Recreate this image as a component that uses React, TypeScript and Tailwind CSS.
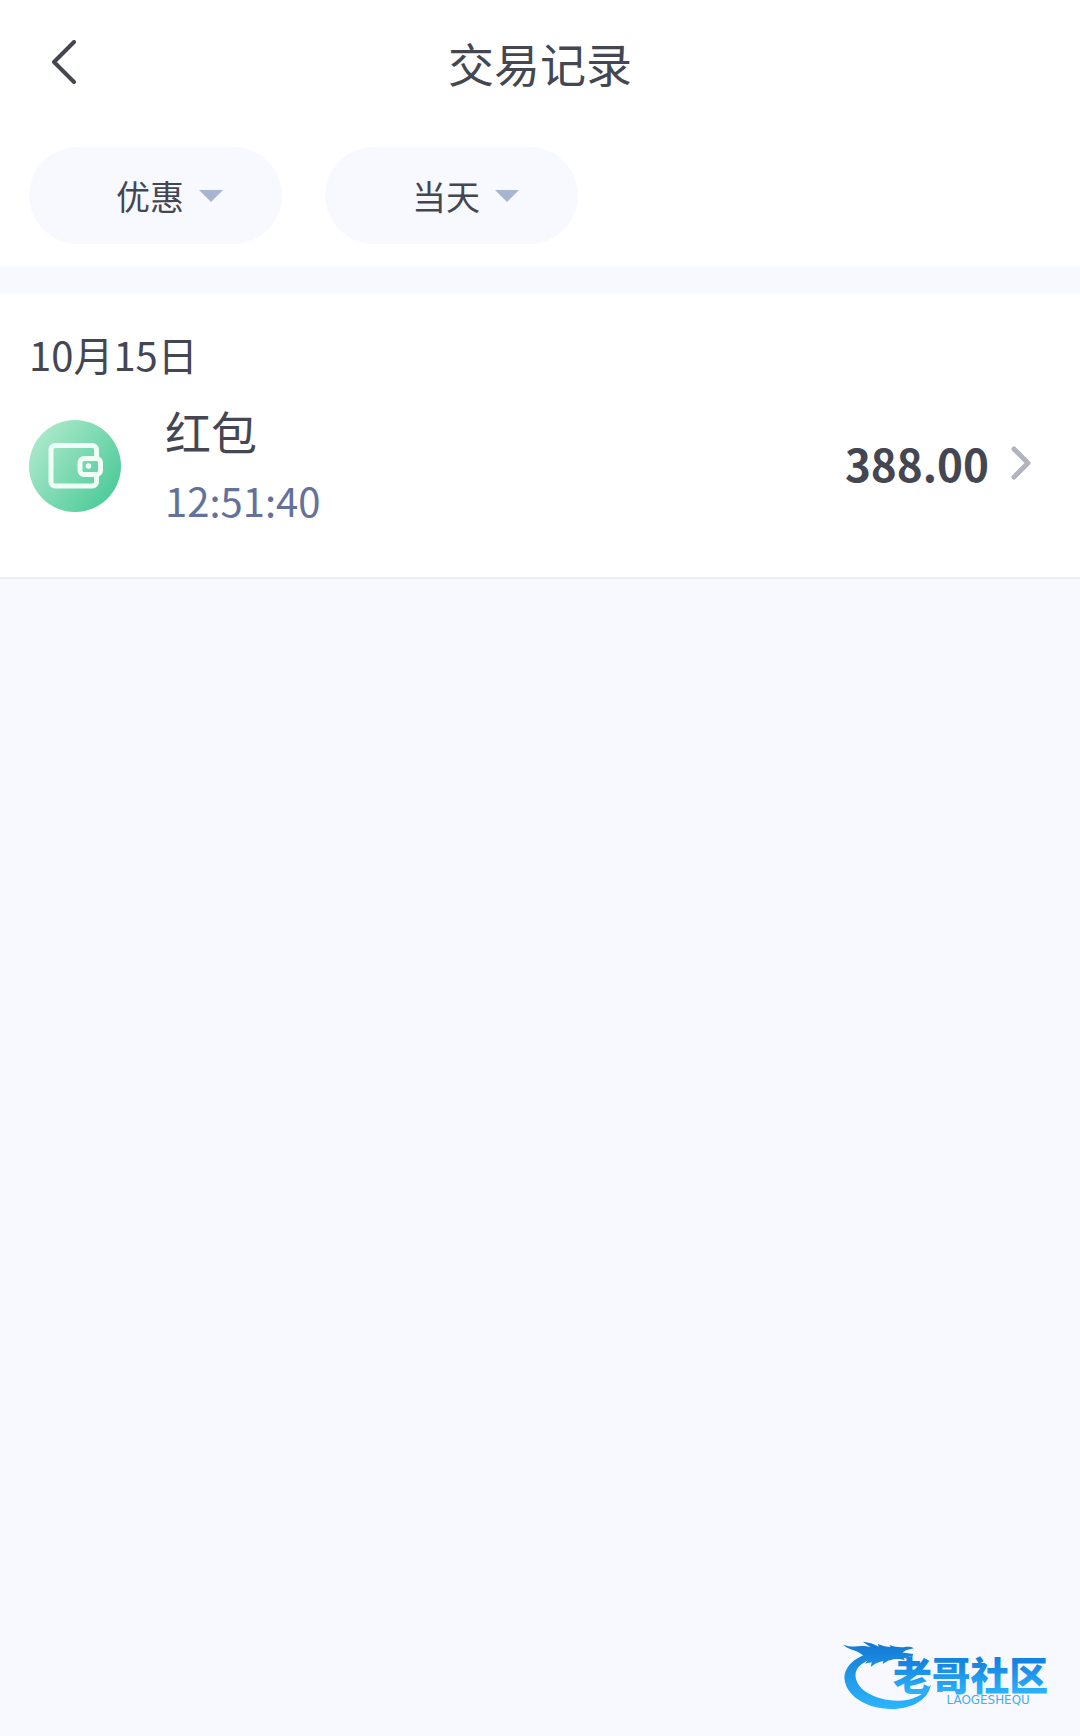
import { useState } from 'react';

interface FilterSelectProps {
  label: string;
  options: string[];
}

interface TransactionRecord {
  id: number;
  title: string;
  time: string;
  amount: string;
}

const records: TransactionRecord[] = [{ id: 1, title: '红包', time: '12:51:40', amount: '388.00' }];

function FilterSelect({ label, options }: FilterSelectProps) {
  const [value, setValue] = useState(options[0]);

  return (
    <div className="relative w-[253px]">
      <select
        aria-label={label}
        value={value}
        onChange={(e) => setValue(e.target.value)}
        className="block h-[97px] w-full appearance-none rounded-full bg-[#f8f9fe] pl-[87px] text-[34px] text-[#444752] outline-none"
      >
        {options.map((option) => (
          <option key={option}>{option}</option>
        ))}
      </select>
      <svg
        viewBox="0 0 24 12"
        className="pointer-events-none absolute top-[43px] left-[170px] h-3 w-6 fill-[#a7b5d2]"
        aria-hidden="true"
      >
        <path d="M0 0h24L12 12z" />
      </svg>
    </div>
  );
}

function WalletIcon() {
  return (
    <svg viewBox="0 0 92 92" className="size-[92px] shrink-0" fill="none" aria-hidden="true">
      <defs>
        <linearGradient id="wallet" x1="8" y1="18" x2="84" y2="74" gradientUnits="userSpaceOnUse">
          <stop stopColor="#a9e8c9" />
          <stop offset="1" stopColor="#50cb9b" />
        </linearGradient>
      </defs>
      <circle cx="46" cy="46" r="46" fill="url(#wallet)" />
      <g stroke="#effff8" strokeWidth="5" strokeLinejoin="round">
        <path d="M67.500 38v-8.500a4 4 0 0 0-4-4H26a4 4 0 0 0-4 4V62a4 4 0 0 0 4 4h37.500a4 4 0 0 0 4-4v-7" />
        <rect x="51" y="38.500" width="20.500" height="16" rx="4" />
      </g>
      <circle cx="59.500" cy="46" r="2.800" fill="#effff8" />
    </svg>
  );
}

function CommunityLogo() {
  return (
    <svg viewBox="36 32 666 208" className="h-[69px] w-[222px]" role="img" aria-label="老哥社区">
      <defs>
        <linearGradient id="dragon" x1="0" y1="40" x2="0" y2="235" gradientUnits="userSpaceOnUse">
          <stop stopColor="#1479d4" />
          <stop offset="1" stopColor="#2bb5fb" />
        </linearGradient>
        <linearGradient id="letters" x1="0" y1="95" x2="0" y2="190" gradientUnits="userSpaceOnUse">
          <stop stopColor="#1583e0" />
          <stop offset="1" stopColor="#2bb3fa" />
        </linearGradient>
      </defs>
      {/* body */}
      <path
        fill="url(#dragon)"
        d="M128 66C66 80 40 116 42 146c3 48 62 91 142 91 62 0 112-29 118-74-18 32-58 50-102 49-66-1-123-33-125-75-1-24 18-42 60-54z"
      />
      {/* head, horns and whiskers */}
      <path
        fill="url(#dragon)"
        d="M37 43c20 7 38 6 56 4 10-1 20 1 28 4l-24-17c20 2 36 8 48 15l-2-8c14 6 26 9 38 9l-4-6c18 6 34 8 48 6 9-1 18 0 26 4l-24 6-10 7 32 4-3 9-12-3 9 9-23-3 4 7c-20-6-34-4-49 1l-18 10 2-9c-16 3-28 10-38 18l3-14-20 4 10-12-24 5 12-14C83 58 55 60 37 43z"
      />
      <text
        x="422"
        y="181"
        textAnchor="middle"
        fill="url(#letters)"
        className="font-['Noto_Sans_CJK_SC',sans-serif] text-[117px] font-black"
      >
        老哥社区
      </text>
      <text
        x="475"
        y="222"
        textAnchor="middle"
        fill="#45aeea"
        className="font-['DejaVu_Sans',sans-serif] text-[36px]"
      >
        LAOGESHEQU
      </text>
    </svg>
  );
}

function RecordRow({ record }: { record: TransactionRecord }) {
  return (
    <a href={`#record-${record.id}`} className="flex items-center pr-5">
      <WalletIcon />
      <div className="ml-11 flex-1">
        <p className="text-[46px] leading-[68px]">{record.title}</p>
        <p className="text-[40px] leading-[72px] text-[#63719b]">{record.time}</p>
      </div>
      <div className="flex items-center gap-[22px] pb-1.5">
        <span className="text-[44px] leading-[68px] font-bold">{record.amount}</span>
        <svg
          viewBox="0 0 20 34"
          className="h-[34px] w-5 fill-none stroke-[#b1b4bf] stroke-[5]"
          strokeLinecap="round"
          strokeLinejoin="round"
          aria-hidden="true"
        >
          <path d="M3 3l14 14L3 31" />
        </svg>
      </div>
    </a>
  );
}

export default function App() {
  return (
    <div
      lang="zh-CN"
      className="flex min-h-screen flex-col bg-[#f8f9fe] font-['Noto_Sans_CJK_SC',sans-serif] text-[#444752]"
    >
      <header className="bg-white pb-[22px]">
        <div className="grid h-[124px] grid-cols-[1fr_auto_1fr] items-center px-11">
          <button type="button" aria-label="返回" className="flex size-10 items-center justify-center">
            <svg
              viewBox="0 0 24 44"
              className="h-11 w-6 fill-none stroke-[#45474f] stroke-[4]"
              strokeLinecap="round"
              strokeLinejoin="round"
              aria-hidden="true"
            >
              <path d="M22 2L2 22l20 20" />
            </svg>
          </button>
          <h1 className="text-[46px] leading-[68px]">交易记录</h1>
        </div>
        <div className="flex gap-[43px] px-[29px] pt-[23px]">
          <FilterSelect label="类型" options={['优惠', '存款', '取款']} />
          <FilterSelect label="日期" options={['当天', '昨天', '近7天']} />
        </div>
      </header>

      <main className="mt-7 border-b-2 border-[#eeeff2] bg-white px-[29px] pt-[30px] pb-[41px]">
        <h2 className="text-[40px] leading-[60px]">10月15日</h2>
        <div className="mt-3">
          {records.map((record) => (
            <RecordRow key={record.id} record={record} />
          ))}
        </div>
      </main>

      <footer className="mt-auto flex justify-end pr-4 pb-[26px]">
        <CommunityLogo />
      </footer>
    </div>
  );
}
